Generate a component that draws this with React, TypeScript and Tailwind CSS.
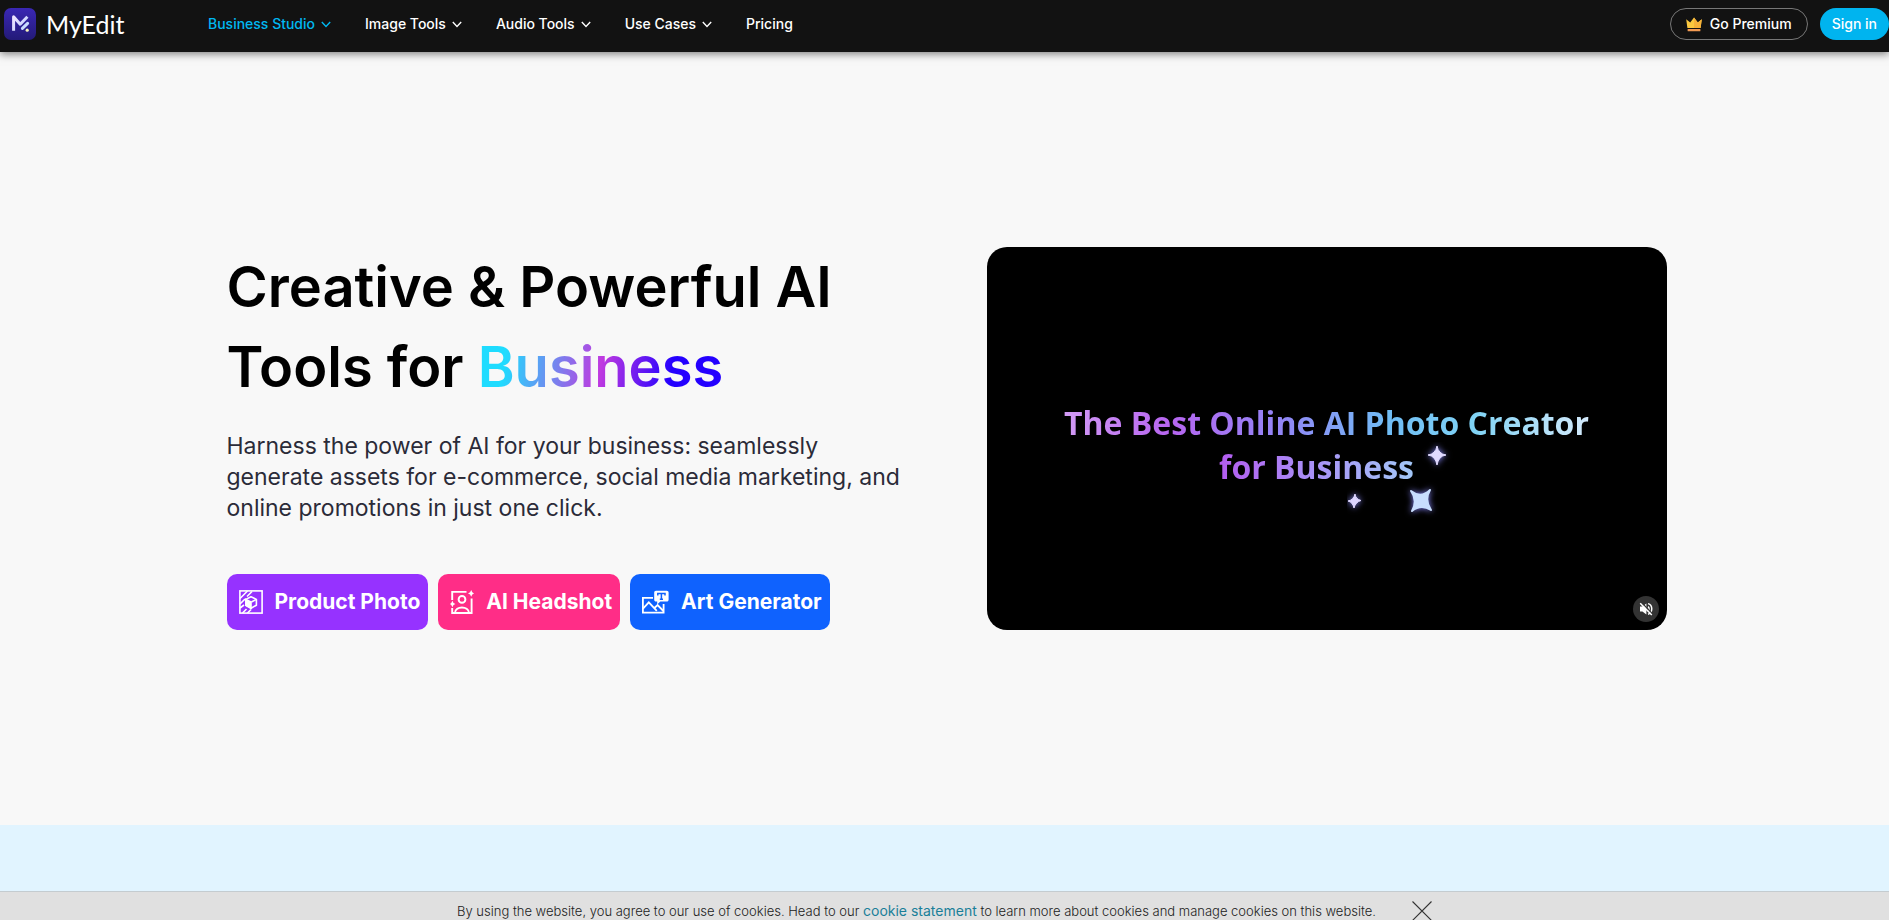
import type { ReactNode } from 'react';

const MENUS = ['Business Studio', 'Image Tools', 'Audio Tools', 'Use Cases'];

function Logo() {
  return (
    <svg className="size-8" viewBox="0 0 32 32" fill="none" aria-hidden="true">
      <defs>
        <linearGradient id="logoBg" x1="0" y1="0" x2="0" y2="32" gradientUnits="userSpaceOnUse">
          <stop stopColor="#3a27b4" />
          <stop offset="1" stopColor="#231a78" />
        </linearGradient>
        <linearGradient id="logoMark" x1="8" y1="8" x2="26" y2="22" gradientUnits="userSpaceOnUse">
          <stop stopColor="#f3e4ff" />
          <stop offset="0.6" stopColor="#cfd6ff" />
          <stop offset="1" stopColor="#b5f3ee" />
        </linearGradient>
      </defs>
      <rect width="32" height="32" rx="7" fill="url(#logoBg)" />
      <path d="M9.6 22.8V8.8L16.2 16.2L23.4 8.8" stroke="url(#logoMark)" strokeWidth="3" strokeLinejoin="round" />
      <path d="M18.4 20.4L23.6 15.4" stroke="#c9dcff" strokeWidth="3" strokeLinecap="round" />
      <circle cx="23.2" cy="22.2" r="1.6" fill="#f5f3b8" />
    </svg>
  );
}

function Chevron() {
  return (
    <svg className="h-[7px] w-[10px]" viewBox="0 0 10 7" fill="none" stroke="currentColor" strokeWidth="1.4" aria-hidden="true">
      <path d="M0.8 1L5 5.4L9.2 1" />
    </svg>
  );
}

function Crown() {
  return (
    <svg className="h-[15px] w-4" viewBox="0 0 16 15" aria-hidden="true">
      <path d="M0.2 2.2L4.2 5.4L8 0.4L11.8 5.4L15.8 2.2L14.6 11H1.4Z" fill="#fbc83f" />
      <path d="M8 0.4L11.8 5.4L15.8 2.2L14.6 11H8Z" fill="#f6b13a" />
      <rect x="1.6" y="12" width="12.8" height="2.2" rx="0.5" fill="#f39a52" />
    </svg>
  );
}

function ProductIcon() {
  return (
    <svg className="size-6" viewBox="0 0 24 24" fill="none" stroke="white" strokeWidth="1.6" aria-hidden="true">
      <rect x="0.9" y="0.9" width="22.2" height="22.2" />
      <path d="M1 8.5L8.5 1M1 14L6 9M8 6.5L13 1.5M1 18L5 15M3.5 23L7.500 19M8.5 23L12 19.5" />
      <path d="M12 6.8L17.4 9.4V15.2L12 18.2L6.8 15.2V9.4Z" strokeLinejoin="round" />
      <path d="M12.400 12L17.4 9.4" />
      <path d="M6.8 9.4L12 12V18.2L6.8 15.2Z" fill="white" />
    </svg>
  );
}

function HeadshotIcon() {
  return (
    <svg className="size-6" viewBox="0 0 24 24" fill="none" stroke="white" strokeWidth="1.9" aria-hidden="true">
      <path d="M16.5 1.9H2.2V10M2.2 18V23H21.6V8.6" />
      <circle cx="12" cy="9.4" r="3.4" />
      <path d="M5 23C5.2 15.6 18.6 15.6 19 23" />
      <path d="M21.2 0L22.3 2.3L24 3.4L22.3 4.5L21.2 6.8L20.1 4.5L18 3.4L20.1 2.3Z" fill="white" stroke="none" />
      <path d="M2.4 10.8L3.5 13L5.4 14L3.5 15L2.4 17.2L1.3 15L0 14L1.3 13Z" fill="white" stroke="none" />
    </svg>
  );
}

function ArtIcon() {
  return (
    <svg className="h-6 w-[27px]" viewBox="0 0 27 24" fill="none" stroke="white" strokeWidth="1.8" aria-hidden="true">
      <path d="M11 7.9H0.9V22.6H21.6V14" />
      <path d="M1 18.6L6.8 12.4L14.8 20.8M12.4 18L15.6 15L21.4 21" />
      <path d="M14 0.800H24.8C25.8 0.800 26.6 1.6 26.6 2.6V9.8C26.6 10.8 25.8 11.6 24.8 11.6H18.4L15.2 14.4V11.6H14C13 11.6 12.200 10.800 12.200 9.8V2.6C12.200 1.6 13 0.800 14 0.800Z" fill="white" stroke="none" />
      <path d="M15.8 5.4V3.4H23V5.4M19.4 3.4V9.2M17.800 9.200H21" stroke="#0f62fe" strokeWidth="1.5" />
    </svg>
  );
}

function MutedIcon() {
  return (
    <svg className="size-[14px]" viewBox="0 0 14 14" fill="none" stroke="white" strokeWidth="1.5" aria-hidden="true">
      <path d="M1 4.6H3.4L7.4 1.4V12.6L3.4 9.4H1Z" fill="white" stroke="none" />
      <path d="M9 4.6C10.4 5.6 10.4 8.4 9 9.6M9 1.6C14 3 14 10.6 9 12.4" />
      <path d="M2.4 0.4L13.6 12" stroke="#333333" strokeWidth="1.4" />
      <path d="M1.2 1.2L12.8 13" />
    </svg>
  );
}

function Sparkles() {
  return (
    <svg className="absolute left-[53%] top-[51%] h-[82px] w-[110px]" viewBox="0 0 110 82" aria-hidden="true">
      <g className="drop-shadow-[0_0_3px_#8b8bff]">
        <path d="M90 4Q91.5 12 99 13Q91.500 14 90 23Q88.5 14 81 13Q88.500 12 90 4Z" fill="#e0daff" stroke="#e0daff" />
        <path d="M8 52Q8.6 57 14 58.5Q8.600 60 7 66Q5.500 60 1 59Q6.500 58 8 52Z" fill="#ddd5ff" stroke="#ddd5ff" />
        <path d="M64 49Q74 57 83 48Q77 58 84 68Q74 61.500 65 69Q71 58.500 64 49Z" fill="#c8defe" stroke="#c8defe" strokeWidth="2" strokeLinejoin="round" />
      </g>
    </svg>
  );
}

function ActionButton({ color, icon, children }: { color: string; icon: ReactNode; children: ReactNode }) {
  return (
    <button type="button" className={`${color} flex h-14 items-center gap-3 rounded-[10px] pl-3 pr-2 text-[21px] font-bold leading-6 text-white`}>
      {icon}
      <span>{children}</span>
    </button>
  );
}

export default function App() {
  return (
    <div className="flex min-h-screen flex-col overflow-x-hidden bg-[#f8f8f8] font-[Inter,sans-serif]">
      {/* Navigation */}
      <header className="sticky top-0 z-40 flex h-[52px] items-center bg-[#121212] pb-1 pl-1 shadow-[0_2px_8px_rgba(0,0,0,0.5)]">
        <a href="/" className="flex w-[204px] items-center gap-[10px] text-white">
          <Logo />
          <span className="font-[Lato,sans-serif] text-[25px] leading-8">MyEdit</span>
        </a>
        <nav className="flex items-center gap-[34px] text-[14px] font-medium leading-5 text-white">
          {MENUS.map((label, i) => (
            <button key={label} type="button" className={`flex items-center gap-[6px] ${i === 0 ? 'text-[#00b8f1]' : ''}`}>
              {label}
              <Chevron />
            </button>
          ))}
          <a href="/pricing">Pricing</a>
        </nav>
        <div className="ml-auto flex items-center gap-3 text-[14px] font-medium leading-5 text-white">
          <button type="button" className="flex h-8 items-center gap-2 rounded-full border border-[#777777] px-[15px]">
            <Crown />
            Go Premium
          </button>
          <button type="button" className="h-8 rounded-full bg-[#00b4ef] px-3">Sign in</button>
        </div>
      </header>

      {/* Hero */}
      <main className="py-[195px]">
        <div className="mx-auto flex max-w-[1444px] items-center justify-between gap-10 pl-1">
          <div className="w-[680px]">
            <h1 className="text-[56px] font-semibold leading-[80px] text-black">
              Creative &amp; Powerful AI
              <br />
              Tools for{' '}
              <span className="bg-[linear-gradient(100deg,#1fdcff_12%,#c03ae0_50%,#2400ff_78%)] bg-clip-text text-transparent">Business</span>
            </h1>
            <p className="mt-6 text-[23px] leading-[31px] text-[#2b2b38]">
              Harness the power of AI for your business: seamlessly
              <br />
              generate assets for e-commerce, social media marketing, and
              <br />
              online promotions in just one click.
            </p>
            <div className="mt-[50px] flex gap-[10px]">
              <ActionButton color="bg-[#9632ff]" icon={<ProductIcon />}>Product Photo</ActionButton>
              <ActionButton color="bg-[#ff2d87]" icon={<HeadshotIcon />}>AI Headshot</ActionButton>
              <ActionButton color="bg-[#0f62fe]" icon={<ArtIcon />}>Art Generator</ActionButton>
            </div>
          </div>

          {/* Video */}
          <div className="relative flex aspect-video w-[680px] flex-col items-center rounded-[20px] bg-black pt-[154px] font-['Open_Sans',sans-serif] text-[32px] font-bold leading-[44px]">
            <span className="bg-[linear-gradient(90deg,#d29bf5,#b765f0_20%,#9187f6_42%,#70bdf5_62%,#80d3f5_78%,#d3e9fb)] bg-clip-text text-transparent">
              The Best Online AI Photo Creator
            </span>
            <span className="mr-5 bg-[linear-gradient(90deg,#b35cf0,#a98df6_45%,#a3c8f8)] bg-clip-text text-transparent">for Business</span>
            <Sparkles />
            <button type="button" aria-label="Unmute" className="absolute bottom-2 right-2 flex size-[26px] items-center justify-center rounded-full bg-[#333333]">
              <MutedIcon />
            </button>
          </div>
        </div>
      </main>

      <section className="min-h-[95px] flex-1 bg-[#e1f4ff]" />

      {/* Cookie notice */}
      <div className="fixed inset-x-0 bottom-0 z-50 flex h-[29px] justify-center gap-9 overflow-hidden border-t border-[#c4ccd0] bg-[#e0e0e0] text-[13px] font-light text-[#222222]">
        <p className="pt-[9px] leading-5">
          By using the website, you agree to our use of cookies. Head to our{' '}
          <a href="/cookies" className="text-[14px] font-normal text-[#1a7f99]">cookie statement</a>
          {' '}to learn more about cookies and manage cookies on this website.
        </p>
        <button type="button" aria-label="Close" className="flex h-[29px] w-5 shrink-0 pt-[9px]">
          <svg className="size-5 shrink-0" viewBox="0 0 20 20" stroke="#333333" strokeWidth="1.1" aria-hidden="true">
            <path d="M0.5 0.5L19.5 19.5M19.5 0.5L0.5 19.5" />
          </svg>
        </button>
      </div>
    </div>
  );
}
